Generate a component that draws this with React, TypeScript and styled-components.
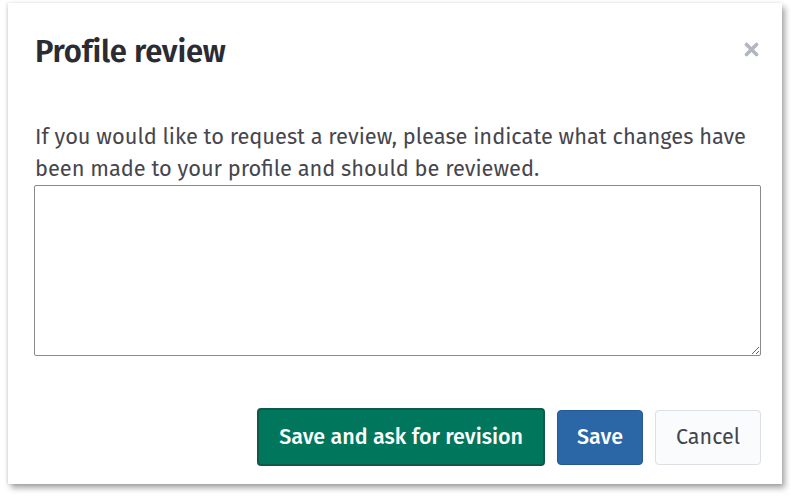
import React from "react";
import styled, { createGlobalStyle } from "styled-components";

const Global = createGlobalStyle`
  html, body { margin: 0; padding: 0; background: #ffffff; }
  body { font-family: "Fira Sans", "Open Sans", "Noto Sans", sans-serif; }
  * { box-sizing: border-box; }
`;

const Stage = styled.div`
  padding: 3px 9px 0 8px;
  width: 791px;
  height: 501px;
`;

const Dialog = styled.div`
  width: 774px;
  height: 481px;
  background: #ffffff;
  box-shadow: 3px 4px 6px rgba(0, 0, 0, 0.35), -1px 0 3px rgba(0, 0, 0, 0.12);
  padding: 26px 21px 18px 26px;
  display: flex;
  flex-direction: column;
`;

const Header = styled.div`
  display: flex;
  align-items: flex-start;
  justify-content: space-between;
`;

const Title = styled.h2`
  margin: 0;
  padding-left: 1px;
  font-size: 31px;
  line-height: 46px;
  font-weight: 600;
  color: #2b2b33;
  letter-spacing: -0.2px;
`;

const Close = styled.button`
  border: 0;
  background: none;
  padding: 0;
  margin: 12px 2px 0 0;
  width: 16px;
  height: 16px;
  display: flex;
  align-items: center;
  justify-content: center;
  cursor: pointer;
`;

const Body = styled.div`
  margin-top: 46px;
  display: flex;
  flex-direction: column;
`;

const Text = styled.p`
  margin: 0;
  padding-left: 1px;
  font-size: 21.8px;
  line-height: 32px;
  color: #46464e;
`;

const Area = styled.textarea`
  margin-top: 0;
  width: 727px;
  height: 171px;
  border: 1px solid #8a8a8a;
  border-radius: 2px;
  resize: vertical;
  font-family: inherit;
  font-size: 16px;
  padding: 8px;
`;

const Footer = styled.div`
  margin-top: auto;
  display: flex;
  justify-content: flex-end;
  align-items: center;
  gap: 12px;
`;

const Button = styled.button<{ $variant: "green" | "blue" | "plain" }>`
  font-family: inherit;
  font-size: 21.5px;
  font-weight: ${(p) => (p.$variant === "plain" ? 400 : 500)};
  height: ${(p) => (p.$variant === "green" ? "58px" : "55px")};
  padding: 0 ${(p) => (p.$variant === "blue" ? "19px" : "20px")};
  border-radius: 4px;
  cursor: pointer;
  color: ${(p) => (p.$variant === "plain" ? "#44444c" : "#ffffff")};
  background: ${(p) =>
    p.$variant === "green" ? "#00775d" : p.$variant === "blue" ? "#2b66a7" : "#fafbfc"};
  border: ${(p) =>
    p.$variant === "green"
      ? "2px solid #0c5a47"
      : p.$variant === "blue"
      ? "1px solid #245a94"
      : "1px solid #dcdfe4"};
`;

export default function App() {
  return (
    <>
      <Global />
      <Stage>
        <Dialog>
          <Header>
            <Title>Profile review</Title>
            <Close aria-label="Close">
              <svg width="15" height="15" viewBox="0 0 15 15">
                <path d="M2.5 2.5 L12.5 12.5 M12.5 2.5 L2.5 12.5" stroke="#b2b6c0" strokeWidth="3.6" strokeLinecap="round" />
              </svg>
            </Close>
          </Header>
          <Body>
            <Text>
              If you would like to request a review, please indicate what changes have been made to your profile and should be reviewed.
            </Text>
            <Area />
          </Body>
          <Footer>
            <Button $variant="green">Save and ask for revision</Button>
            <Button $variant="blue">Save</Button>
            <Button $variant="plain">Cancel</Button>
          </Footer>
        </Dialog>
      </Stage>
    </>
  );
}
